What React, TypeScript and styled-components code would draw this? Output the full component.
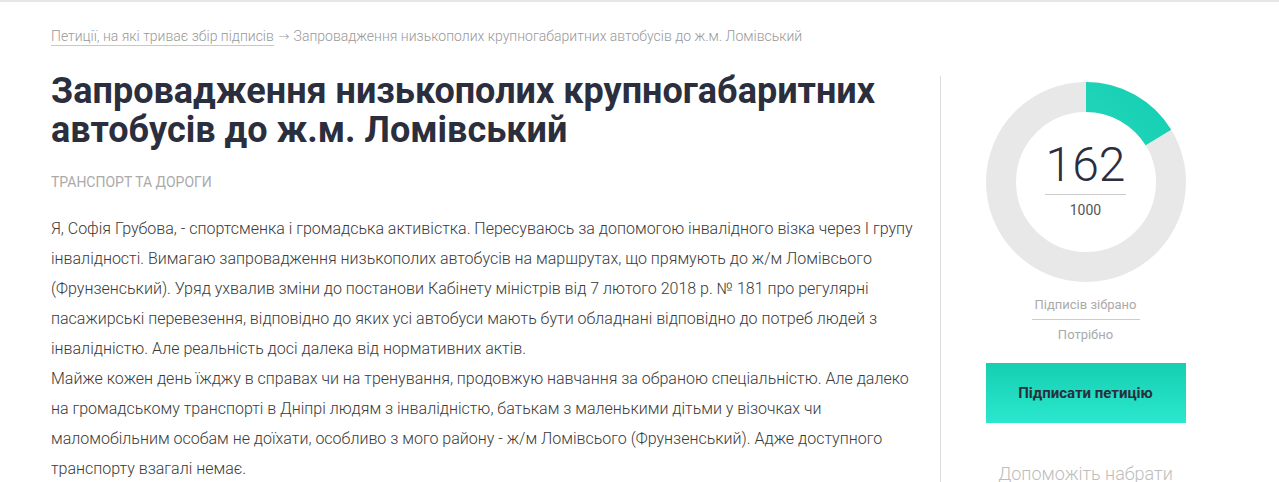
import React from 'react';
import styled, { createGlobalStyle } from 'styled-components';

const GlobalStyle = createGlobalStyle`
  html, body {
    margin: 0;
    padding: 0;
    background: #fff;
    font-family: Roboto, 'Noto Sans', sans-serif;
  }
`;

const Page = styled.div`
  border-top: 2px solid #e6e6e6;
  height: 480px;
  overflow: hidden;
`;

const Container = styled.div`
  padding: 0 49px 0 51px;
`;

const Breadcrumbs = styled.div`
  padding-top: 26px;
  font-size: 14px;
  line-height: 16px;
  font-weight: 300;
  color: #999;

  a {
    color: #999;
    text-decoration: none;
    border-bottom: 1px solid #c8c8c8;
    padding-bottom: 1px;
  }
`;

const Arrow = styled.span`
  font-family: 'DejaVu Sans', sans-serif;
  font-size: 13px;
  margin: 0 1px;
`;

const Main = styled.div`
  display: flex;
  margin-top: 31px;
`;

const Content = styled.div`
  flex: 1;
  padding-right: 25px;
  margin-top: -4px;
`;

const Title = styled.h1`
  margin: 0;
  font-size: 36px;
  line-height: 39px;
  font-weight: 700;
  color: #2b2e3d;
`;

const Category = styled.div`
  margin-top: 24px;
  font-size: 14px;
  line-height: 16px;
  color: #aaa;
  text-transform: uppercase;
`;

const Text = styled.div`
  margin-top: 24px;
  font-size: 16px;
  line-height: 30px;
  font-weight: 300;
  color: #3a3a3a;

  p {
    margin: 0;
  }
`;

const Sidebar = styled.aside`
  width: 289px;
  border-left: 1px solid #dcdcdc;
  display: flex;
  flex-direction: column;
  align-items: center;
  padding-top: 6px;
`;

const Donut = styled.div`
  position: relative;
  width: 200px;
  height: 200px;
`;

const DonutCenter = styled.div`
  position: absolute;
  inset: 0;
  display: flex;
  flex-direction: column;
  align-items: center;
  justify-content: center;
  padding-bottom: 6px;
`;

const Count = styled.div`
  font-size: 48px;
  line-height: 50px;
  font-weight: 300;
  color: #2b2e3d;
  width: 81px;
  text-align: center;
  padding-bottom: 4px;
  border-bottom: 1px solid #ccc;
`;

const Goal = styled.div`
  margin-top: 7px;
  font-size: 14px;
  line-height: 16px;
  color: #555;
`;

const Labels = styled.div`
  margin-top: 15px;
  display: flex;
  flex-direction: column;
  align-items: center;
  font-size: 13px;
  line-height: 15px;
  color: #aaa;
`;

const Label = styled.div<{ $divider?: boolean }>`
  width: 108px;
  text-align: center;
  padding: 0 0 7px;
  border-bottom: ${(p) => (p.$divider ? '1px solid #ccc' : 'none')};
  & + & {
    padding-top: 7px;
  }
`;

const SignButton = styled.button`
  margin-top: 14px;
  width: 200px;
  height: 60px;
  border: none;
  background: linear-gradient(180deg, #16cfb2 0%, #2ae7cd 100%);
  font-family: Roboto, sans-serif;
  font-size: 15px;
  font-weight: 700;
  color: #2b2e3d;
  cursor: pointer;
`;

const HelpTitle = styled.div`
  margin-top: 40px;
  font-size: 18px;
  line-height: 22px;
  font-weight: 300;
  color: #bdbdbd;
`;

const collected = 162;
const needed = 1000;

function ProgressRing() {
  const r = 85;
  const c = 2 * Math.PI * r;
  const part = (collected / needed) * c;
  return (
    <svg width="200" height="200" viewBox="0 0 200 200">
      <defs>
        <linearGradient id="ring" x1="0" y1="0" x2="1" y2="1">
          <stop offset="0%" stopColor="#3fe0ca" />
          <stop offset="100%" stopColor="#14cfb2" />
        </linearGradient>
      </defs>
      <circle cx="100" cy="100" r={r} fill="none" stroke="#e8e8e8" strokeWidth="30" />
      <circle
        cx="100"
        cy="100"
        r={r}
        fill="none"
        stroke="url(#ring)"
        strokeWidth="30"
        strokeDasharray={`${part} ${c}`}
        transform="rotate(-90 100 100)"
      />
    </svg>
  );
}

export default function App() {
  return (
    <Page>
      <GlobalStyle />
      <Container>
        <Breadcrumbs>
          <a href="#">Петиції, на які триває збір підписів</a> <Arrow>→</Arrow> Запровадження низькополих крупногабаритних автобусів до ж.м. Ломівський
        </Breadcrumbs>
        <Main>
          <Content>
            <Title>Запровадження низькополих крупногабаритних автобусів до ж.м. Ломівський</Title>
            <Category>Транспорт та дороги</Category>
            <Text>
              <p>
                Я, Софія Грубова, - спортсменка і громадська активістка. Пересуваюсь за допомогою інвалідного візка через І групу інвалідності. Вимагаю запровадження низькополих автобусів на маршрутах, що прямують до ж/м Ломівсього (Фрунзенський). Уряд ухвалив зміни до постанови Кабінету міністрів від 7 лютого 2018 р. № 181 про регулярні пасажирські перевезення, відповідно до яких усі автобуси мають бути обладнані відповідно до потреб людей з інвалідністю. Але реальність досі далека від нормативних актів.
              </p>
              <p>
                Майже кожен день їжджу в справах чи на тренування, продовжую навчання за обраною спеціальністю. Але далеко на громадському транспорті в Дніпрі людям з інвалідністю, батькам з маленькими дітьми у візочках чи маломобільним особам не доїхати, особливо з мого району - ж/м Ломівсього (Фрунзенський). Адже доступного транспорту взагалі немає.
              </p>
            </Text>
          </Content>
          <Sidebar>
            <Donut>
              <ProgressRing />
              <DonutCenter>
                <Count>{collected}</Count>
                <Goal>{needed}</Goal>
              </DonutCenter>
            </Donut>
            <Labels>
              <Label $divider>Підписів зібрано</Label>
              <Label>Потрібно</Label>
            </Labels>
            <SignButton>Підписати петицію</SignButton>
            <HelpTitle>Допоможіть набрати</HelpTitle>
          </Sidebar>
        </Main>
      </Container>
    </Page>
  );
}
